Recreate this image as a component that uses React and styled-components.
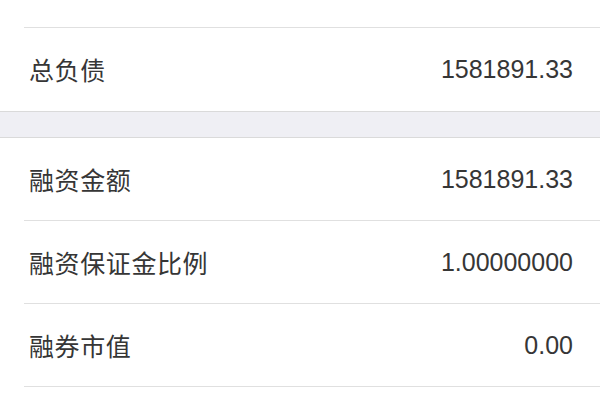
import React from "react";
import styled, { createGlobalStyle } from "styled-components";

const GlobalStyle = createGlobalStyle`
  html, body {
    margin: 0;
    padding: 0;
    background: #ffffff;
    overflow: hidden;
  }
  body {
    font-family: "Liberation Sans", "Noto Sans CJK SC", sans-serif;
  }
`;

const Page = styled.div`
  width: 600px;
  margin-top: -55px;
  background: #efeff4;
  display: flex;
  flex-direction: column;
`;

const Group = styled.section`
  background: #ffffff;
  border-top: ${(p) => (p.$top ? "1px solid #dadada" : "none")};
  border-bottom: 1px solid #dadada;
  display: flex;
  flex-direction: column;
`;

const Spacer = styled.div`
  height: 25px;
  background: #efeff4;
`;

const Row = styled.div`
  position: relative;
  height: 83px;
  display: flex;
  align-items: center;
  justify-content: space-between;
  padding: 0 27px 0 29px;
  box-sizing: border-box;
  border-bottom: 1px solid transparent;
  &::after {
    content: "";
    display: ${(p) => (p.$last ? "none" : "block")};
    position: absolute;
    left: 24px;
    right: 0;
    bottom: -1px;
    height: 1px;
    background: #e0e0e0;
  }
`;

const Label = styled.span`
  font-family: "Noto Sans CJK SC", sans-serif;
  font-size: 25px;
  color: #363636;
  letter-spacing: 0.6px;
`;

const Value = styled.span`
  font-family: "Liberation Sans", sans-serif;
  font-size: 25px;
  color: #363636;
`;

const groups = [
  [
    { label: "资产总值", value: "0.00" },
    { label: "总负债", value: "1581891.33" },
  ],
  [
    { label: "融资金额", value: "1581891.33" },
    { label: "融资保证金比例", value: "1.00000000" },
    { label: "融券市值", value: "0.00" },
    { label: "融券负债", value: "0.00" },
  ],
];

export default function App() {
  return (
    <>
      <GlobalStyle />
      <Page>
        {groups.map((rows, gi) => (
          <React.Fragment key={gi}>
            {gi > 0 && <Spacer />}
            <Group $top={gi > 0}>
              {rows.map((r, i) => (
                <Row key={r.label} $last={i === rows.length - 1}>
                  <Label>{r.label}</Label>
                  <Value>{r.value}</Value>
                </Row>
              ))}
            </Group>
          </React.Fragment>
        ))}
      </Page>
    </>
  );
}
